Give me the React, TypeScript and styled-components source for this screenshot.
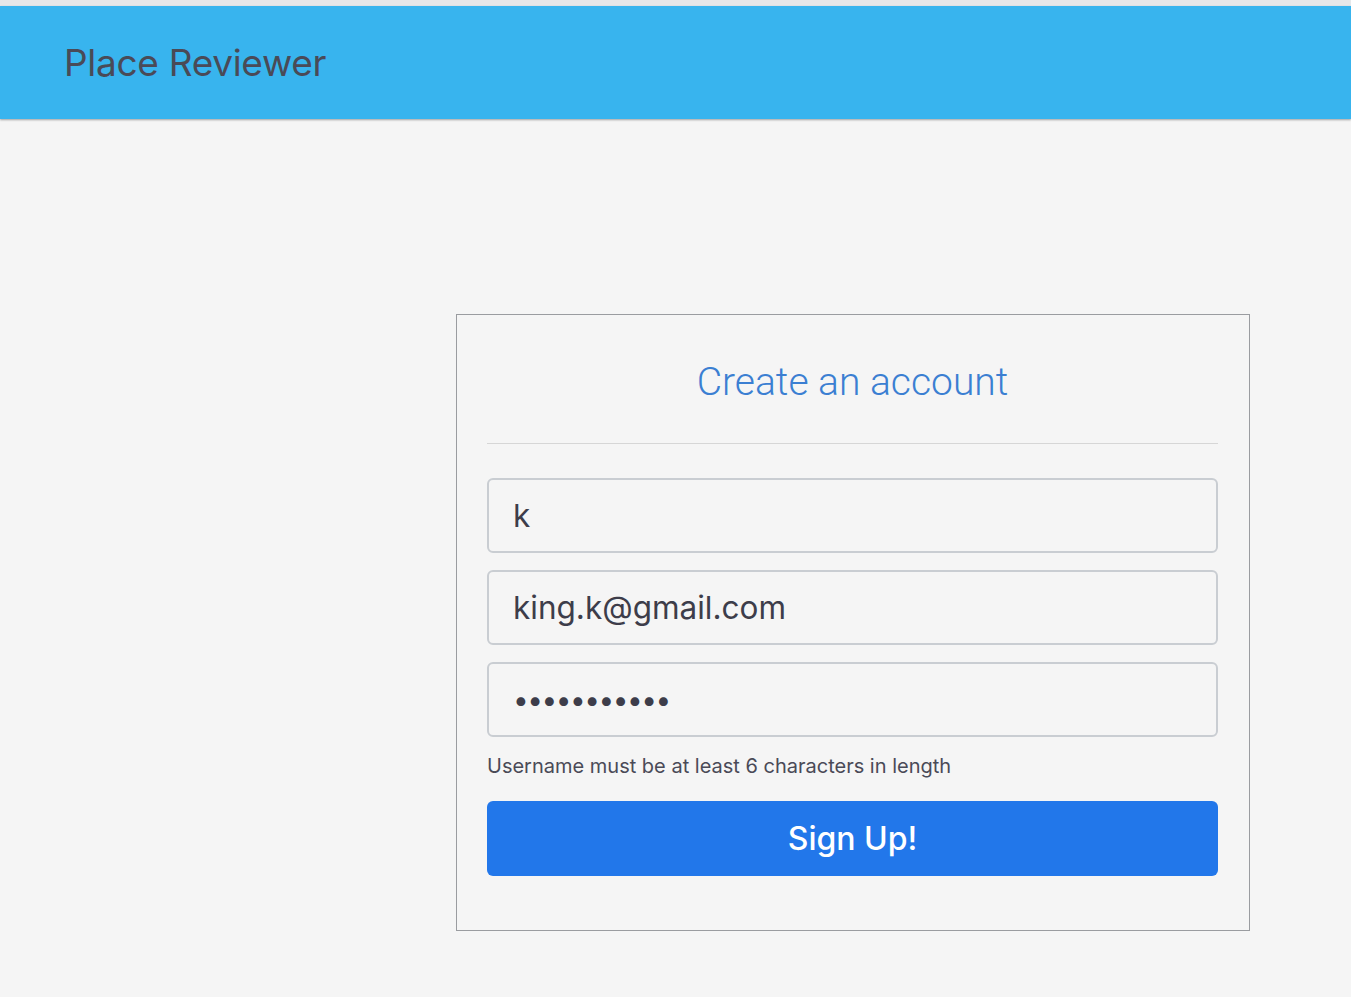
import styled, { createGlobalStyle } from "styled-components";

const GlobalStyle = createGlobalStyle`
  html, body {
    margin: 0;
    padding: 0;
    background: #f5f5f5;
    font-family: Inter, "Noto Sans", sans-serif;
  }
`;

const Page = styled.div`
  min-height: 997px;
  background: #f5f5f5;
  border-top: 6px solid #e6e7e9;
`;

const Header = styled.header`
  height: 113px;
  background: #38b4ee;
  display: flex;
  align-items: center;
  padding-left: 64px;
  box-shadow: 0 1px 2px rgba(0, 0, 0, 0.35);
`;

const Brand = styled.h1`
  margin: 0;
  font-size: 37px;
  font-weight: 400;
  color: #4a4a57;
  letter-spacing: -0.3px;
`;

const Main = styled.main`
  display: flex;
  padding: 195px 0 0 456px;
`;

const Card = styled.section`
  width: 731px;
  border: 1px solid #9a9ca0;
  padding: 0 31px 54px 30px;
  display: flex;
  flex-direction: column;
`;

const Title = styled.h2`
  margin: 0;
  padding: 44px 0 38px;
  text-align: center;
  font-family: Roboto, sans-serif;
  font-weight: 300;
  font-size: 39px;
  color: #3b7fd2;
  border-bottom: 1px solid #d6d6d6;
`;

const Form = styled.form`
  display: flex;
  flex-direction: column;
  gap: 17px;
  padding-top: 34px;
`;

const Field = styled.input<{ $masked?: boolean }>`
  box-sizing: border-box;
  width: 100%;
  height: 75px;
  border: 2px solid #c9cdd2;
  border-radius: 6px;
  background: #f5f5f5;
  padding: 0 24px;
  font-family: Inter, sans-serif;
  font-size: ${(p) => (p.$masked ? "28px" : "31.5px")};
  letter-spacing: ${(p) => (p.$masked ? "-1.5px" : "0")};
  color: #3d3d4a;
  outline: none;
`;

const Hint = styled.p`
  margin: 17px 0 0;
  font-size: 20px;
  color: #4a4a57;
`;

const SubmitButton = styled.button`
  margin-top: 23px;
  height: 75px;
  border: none;
  border-radius: 6px;
  background: #2277ea;
  color: #ffffff;
  font-family: Inter, sans-serif;
  font-size: 32px;
  font-weight: 500;
  cursor: pointer;
`;

export default function App() {
  return (
    <>
      <GlobalStyle />
      <Page>
        <Header>
          <Brand>Place Reviewer</Brand>
        </Header>
        <Main>
          <Card>
            <Title>Create an account</Title>
            <Form onSubmit={(e) => e.preventDefault()}>
              <Field type="text" defaultValue="k" />
              <Field type="email" defaultValue="king.k@gmail.com" />
              <Field type="password" defaultValue="12345678901" $masked />
            </Form>
            <Hint>Username must be at least 6 characters in length</Hint>
            <SubmitButton type="button">Sign Up!</SubmitButton>
          </Card>
        </Main>
      </Page>
    </>
  );
}
